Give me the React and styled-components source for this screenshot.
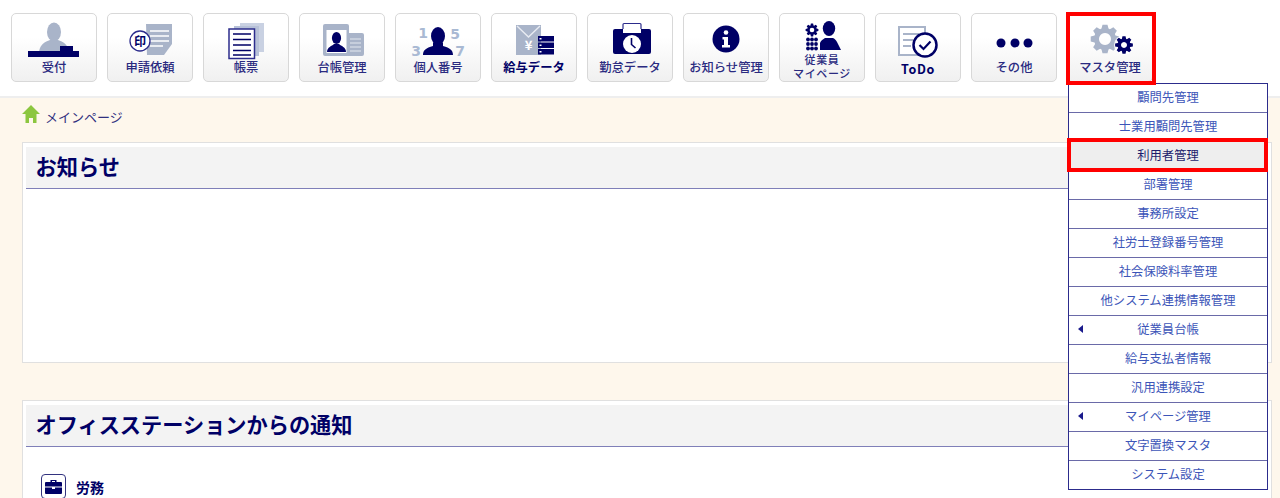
import React from "react";
import styled, { createGlobalStyle } from "styled-components";

const NAVY = "#000066";
const GREY = "#a9b4c9";
const PALE = "#c9d1e2";

const GlobalStyle = createGlobalStyle`
    html, body {
        margin: 0;
        padding: 0;
        height: 498px;
        overflow: hidden;
        background: #fff;
        font-family: "Noto Sans CJK JP", "Noto Sans", sans-serif;
    }
`;

const Page = styled.div`
    width: 1280px;
    height: 498px;
    overflow: hidden;
    display: flex;
    flex-direction: column;
`;

const Toolbar = styled.nav`
    flex: none;
    height: 83px;
    padding: 13px 0 0 11px;
    display: flex;
    gap: 10px;
    background: #fff;
    border-bottom: 2px solid #eeeeee;
`;

const ToolItem = styled.div`
    position: relative;
    width: 86px;
    height: 69px;
`;

const ToolButton = styled.a`
    display: block;
    box-sizing: border-box;
    width: 86px;
    height: 69px;
    border: 1px solid #d8d8d8;
    border-radius: 5px;
    background: linear-gradient(#ffffff 35%, #f0f0f0);
    text-align: center;
    color: ${NAVY};
    overflow: hidden;
    svg {
        display: block;
        margin: -1px;
        overflow: visible;
    }
`;

const ToolLabel = styled.div`
    font-size: 12.3px;
    line-height: 14px;
    font-weight: ${(p) => (p.$bold ? 700 : 500)};
    color: ${(p) => (p.$bold ? NAVY : "#2a2a80")};
    margin-top: 2px;
    white-space: nowrap;
`;

const LatinLabel = styled(ToolLabel)`
    font-size: 12.5px;
    letter-spacing: 0.6px;
    margin-top: 4px;
`;

const TopLabel = styled(ToolLabel)`
    font-size: 11px;
    letter-spacing: 0.6px;
    margin-top: -7px;
`;

const BottomLabel = styled(TopLabel)`
    margin-top: 0;
`;

const RedBox = styled.div`
    position: absolute;
    box-sizing: border-box;
    border: 4px solid #ff0000;
    pointer-events: none;
    z-index: 3;
`;

const MasterMark = styled(RedBox)`
    left: -1px;
    top: -1px;
    width: 90px;
    height: 73px;
`;

const RowMark = styled(RedBox)`
    left: -2px;
    top: 54px;
    width: 201px;
    height: 34px;
`;

const Dropdown = styled.ul`
    position: absolute;
    left: 1px;
    top: 70px;
    width: 200px;
    box-sizing: border-box;
    margin: 0;
    padding: 0;
    list-style: none;
    background: #fff;
    border: 1px solid #2c2c8c;
    z-index: 2;
`;

const DropRow = styled.li`
    position: relative;
    height: 29px;
    box-sizing: border-box;
    padding-bottom: 2px;
    display: flex;
    align-items: center;
    justify-content: center;
    font-size: 12.3px;
    color: ${(p) => (p.$active ? "#1c1c6c" : "#3c55b8")};
    background: ${(p) => (p.$active ? "#eeeeee" : "#fff")};
    border-bottom: 1px solid #6a6aa8;
    &:last-of-type {
        border-bottom: none;
        height: 28px;
    }
`;

const SubArrow = styled.span`
    position: absolute;
    left: 9px;
    top: 9px;
    width: 0;
    height: 0;
    border-style: solid;
    border-width: 4px 5px 4px 0;
    border-color: transparent #1a1a8c transparent transparent;
`;

const Main = styled.main`
    flex: 1;
    background: #fef7ec;
    padding: 0 8px 0 22px;
`;

const Breadcrumb = styled.div`
    height: 44px;
    box-sizing: border-box;
    padding-top: 7px;
    display: flex;
    align-items: flex-start;
    gap: 5px;
    font-size: 13px;
    line-height: 24px;
    color: #30307f;
`;

const Card = styled.section`
    box-sizing: border-box;
    height: ${(p) => p.$height}px;
    margin-bottom: 37px;
    background: #fff;
    border: 1px solid #e0e0e0;
    padding: 4px 5px 0 3px;
`;

const CardTitle = styled.h2`
    margin: 0;
    height: 42px;
    box-sizing: border-box;
    padding-left: 9.5px;
    background: #f3f3f3;
    border-bottom: 1px solid #7f7fb8;
    font-size: 21.2px;
    line-height: 37px;
    font-weight: 700;
    color: ${NAVY};
`;

const Category = styled.div`
    display: flex;
    align-items: center;
    gap: 10px;
    margin: 27px 0 0 15px;
    font-size: 14px;
    font-weight: 700;
    color: ${NAVY};
`;

const CategoryIcon = styled.span`
    display: flex;
    align-items: center;
    justify-content: center;
    width: 25px;
    height: 25px;
    box-sizing: border-box;
    border: 1px solid #33337f;
    border-radius: 4px;
    background: #fff;
`;

// builds a cog outline, centre (cx, cy)
const gearPath = (cx, cy, outer, inner, teeth) => {
    const pts = [];
    const step = (Math.PI * 2) / teeth;
    for (let i = 0; i < teeth; i++) {
        const a = i * step;
        const w = step * 0.22;
        [
            [a - step / 2 + w * 0.4, inner],
            [a - w, outer],
            [a + w, outer],
            [a + step / 2 - w * 0.4, inner],
        ].forEach(([t, r]) => {
            pts.push(`${(cx + Math.sin(t) * r).toFixed(2)} ${(cy - Math.cos(t) * r).toFixed(2)}`);
        });
    }
    return `M${pts.join("L")}Z`;
};

const Icon = ({ children, h = 46 }) => (
    <svg width="86" height={h} viewBox={`0 0 86 ${h}`}>{children}</svg>
);

const ReceptionIcon = () => (
    <Icon>
        <ellipse cx="43" cy="19" rx="7" ry="9.5" fill={GREY} />
        <path d="M28 39c1-8 6-10 11-12h8c5 2 10 4 11 12z" fill={GREY} />
        <rect x="17" y="38" width="51" height="6" fill={NAVY} />
        <rect x="49" y="33" width="13" height="5" fill={NAVY} />
    </Icon>
);

const RequestIcon = () => (
    <Icon>
        <path d="M39 11h26v20l-8 11H40z" fill={GREY} />
        <path d="M43 18h19M43 23h19M43 28h19M43 33h13" stroke="#fff" strokeWidth="1.5" />
        <circle cx="33" cy="28" r="10" fill="#fff" stroke="#2c2c8c" strokeWidth="1.3" />
        <text x="33" y="32.5" fontSize="12" fontWeight="700" textAnchor="middle" fill={NAVY}>印</text>
    </Icon>
);

const FormIcon = () => (
    <Icon>
        <rect x="37" y="10" width="24" height="29" fill={PALE} />
        <rect x="31" y="13" width="25" height="30" fill="#b7c1d8" />
        <rect x="26" y="16" width="25.5" height="29.5" fill="#fff" stroke="#2c2c8c" strokeWidth="1.5" />
        <path d="M30 21h18M30 26.5h18M30 32h18M30 37.5h18M30 42h18" stroke={NAVY} strokeWidth="1.5" />
    </Icon>
);

const LedgerIcon = () => (
    <Icon>
        <rect x="24" y="11" width="26" height="32" rx="2" fill={GREY} />
        <rect x="47" y="20" width="18" height="23" rx="2" fill={GREY} />
        <rect x="27.5" y="17" width="20" height="23" fill="#fff" />
        <path d="M51 26h11M51 30h11M51 34h11M51 38h11" stroke="#e4e8f0" strokeWidth="1.2" />
        <ellipse cx="37.5" cy="25" rx="4.6" ry="6" fill={NAVY} />
        <path d="M28 39c0-5 5-6 7-8h5c2 2 7 3 7 8z" fill={NAVY} />
    </Icon>
);

const NumberIcon = () => (
    <Icon>
        <g fontFamily="'DejaVu Sans', sans-serif" fontSize="14" fontWeight="700" fill="#a9b9d3" textAnchor="middle">
            <text x="28" y="25">1</text>
            <text x="60" y="26">5</text>
            <text x="21" y="43">3</text>
            <text x="65" y="43">7</text>
        </g>
        <ellipse cx="43" cy="23" rx="7" ry="9" fill={NAVY} />
        <path d="M28 42c0-5 3-7 10-9v-3h10v3c7 2 10 4 10 9z" fill={NAVY} />
    </Icon>
);

const PayIcon = () => (
    <Icon>
        <rect x="25" y="12" width="25" height="30" fill={GREY} />
        <path d="M26 13l11.500 11L49 13" fill="none" stroke="#e8ebf2" strokeWidth="1.4" />
        <text x="37.500" y="37" fontSize="13" fontWeight="700" textAnchor="middle" fill="#fff">¥</text>
        {[23, 29.500, 36].map((y) => (
            <g key={y}>
                <rect x="47" y={y} width="16" height="5.500" fill={NAVY} />
                <rect x="48.500" y={y + 2} width="2" height="1.500" fill="#fff" />
            </g>
        ))}
    </Icon>
);

const AttendanceIcon = () => (
    <Icon>
        <rect x="36" y="10.500" width="18" height="10" rx="1" fill="#fff" stroke="#2c2c8c" strokeWidth="1.2" />
        <rect x="26" y="16" width="38" height="25" rx="2" fill={NAVY} />
        <rect x="36" y="16" width="18" height="4" fill="#fff" />
        <circle cx="45" cy="31" r="9" fill="#fff" />
        <path d="M44.500 25v6.500l4 3.500" fill="none" stroke={NAVY} strokeWidth="1.6" />
    </Icon>
);

const NoticeIcon = () => (
    <Icon>
        <circle cx="43" cy="26" r="13.500" fill={NAVY} />
        <circle cx="43" cy="19.500" r="2.300" fill="#fff" />
        <path d="M39.500 24h5.500v8h2v2.500h-8V32h2v-5.500h-1.500z" fill="#fff" />
    </Icon>
);

const MyPageIcon = () => (
    <Icon>
        <path d={gearPath(33, 17, 6.5, 4.8, 8)} fill={NAVY} />
        <circle cx="33" cy="17" r="2.300" fill="#fff" />
        {[26.500, 31, 35.500].map((y) =>
            [29, 33, 37].map((x) => <circle key={`${x}-${y}`} cx={x} cy={y} r="1.900" fill={NAVY} />)
        )}
        <ellipse cx="50" cy="15.500" rx="6.200" ry="7.500" fill={NAVY} />
        <path d="M41 37v-7c1-3 4-4 5-5h8c2 1 3 2 4 4l4 8z" fill={NAVY} />
    </Icon>
);

const TodoIcon = () => (
    <Icon>
        <path d="M24 14h26v28H24z" fill="#fff" stroke={GREY} strokeWidth="2" />
        <path d="M28 21h16M28 27h10M28 33h8" stroke={GREY} strokeWidth="1.800" />
        <circle cx="50" cy="32" r="11.500" fill="#fff" stroke={NAVY} strokeWidth="2.500" />
        <path d="M44.500 32l4 4 7-7.500" fill="none" stroke={NAVY} strokeWidth="2.200" />
    </Icon>
);

const MoreIcon = () => (
    <Icon>
        <circle cx="30" cy="30" r="4.500" fill={NAVY} />
        <circle cx="44" cy="30" r="4.500" fill={NAVY} />
        <circle cx="57" cy="30" r="4.500" fill={NAVY} />
    </Icon>
);

const MasterIcon = () => (
    <Icon>
        <path fillRule="evenodd" d={`${gearPath(38, 26, 14.500, 11, 8)}M38 20a6 6 0 1 0 .01 0Z`} fill={GREY} />
        <circle cx="57" cy="32" r="10" fill="#fff" opacity="0.9" />
        <path fillRule="evenodd" d={`${gearPath(57, 32, 9, 6.500, 8)}M57 29a3 3 0 1 0 .01 0Z`} fill={NAVY} />
    </Icon>
);

const tools = [
    { label: "受付", icon: ReceptionIcon },
    { label: "申請依頼", icon: RequestIcon },
    { label: "帳票", icon: FormIcon },
    { label: "台帳管理", icon: LedgerIcon },
    { label: "個人番号", icon: NumberIcon },
    { label: "給与データ", icon: PayIcon, bold: true },
    { label: "勤怠データ", icon: AttendanceIcon },
    { label: "お知らせ管理", icon: NoticeIcon },
    { label: "従業員", second: "マイページ", icon: MyPageIcon },
    { label: "ToDo", icon: TodoIcon, latin: true },
    { label: "その他", icon: MoreIcon },
];

const masterMenu = [
    { label: "顧問先管理" },
    { label: "士業用顧問先管理" },
    { label: "利用者管理", active: true },
    { label: "部署管理" },
    { label: "事務所設定" },
    { label: "社労士登録番号管理" },
    { label: "社会保険料率管理" },
    { label: "他システム連携情報管理" },
    { label: "従業員台帳", sub: true },
    { label: "給与支払者情報" },
    { label: "汎用連携設定" },
    { label: "マイページ管理", sub: true },
    { label: "文字置換マスタ" },
    { label: "システム設定" },
];

const ToolText = ({ label, second, bold, latin }) => {
    if (second) {
        return (
            <>
                <TopLabel>{label}</TopLabel>
                <BottomLabel>{second}</BottomLabel>
            </>
        );
    }
    if (latin) return <LatinLabel $bold>{label}</LatinLabel>;
    return <ToolLabel $bold={bold}>{label}</ToolLabel>;
};

export default function App() {
    return (
        <Page>
            <GlobalStyle />
            <Toolbar>
                {tools.map(({ icon: ToolIcon, ...text }) => (
                    <ToolItem key={text.label}>
                        <ToolButton>
                            <ToolIcon />
                            <ToolText {...text} />
                        </ToolButton>
                    </ToolItem>
                ))}
                <ToolItem>
                    <ToolButton>
                        <MasterIcon />
                        <ToolLabel>マスタ管理</ToolLabel>
                    </ToolButton>
                    <MasterMark />
                    <Dropdown>
                        {masterMenu.map((row) => (
                            <DropRow key={row.label} $active={row.active}>
                                {row.sub && <SubArrow />}
                                {row.label}
                            </DropRow>
                        ))}
                        <RowMark />
                    </Dropdown>
                </ToolItem>
            </Toolbar>
            <Main>
                <Breadcrumb>
                    <svg width="18" height="18" viewBox="0 0 18 18">
                        <path d="M9 0l9 9h-3.500v9H11v-5H7v5H3.500V9H0z" fill="#8cc63f" />
                    </svg>
                    メインページ
                </Breadcrumb>
                <Card $height={221}>
                    <CardTitle>お知らせ</CardTitle>
                </Card>
                <Card $height={140}>
                    <CardTitle>オフィスステーションからの通知</CardTitle>
                    <Category>
                        <CategoryIcon>
                            <svg width="17" height="15" viewBox="0 0 17 15">
                                <path d="M5.500 3V1h6v2H16a1 1 0 0 1 1 1v3.500H0V4a1 1 0 0 1 1-1zM7 3h3V2H7z" fill={NAVY} />
                                <path d="M0 8.500h7V10h3V8.500h7V14a1 1 0 0 1-1 1H1a1 1 0 0 1-1-1z" fill={NAVY} />
                            </svg>
                        </CategoryIcon>
                        労務
                    </Category>
                </Card>
            </Main>
        </Page>
    );
}
